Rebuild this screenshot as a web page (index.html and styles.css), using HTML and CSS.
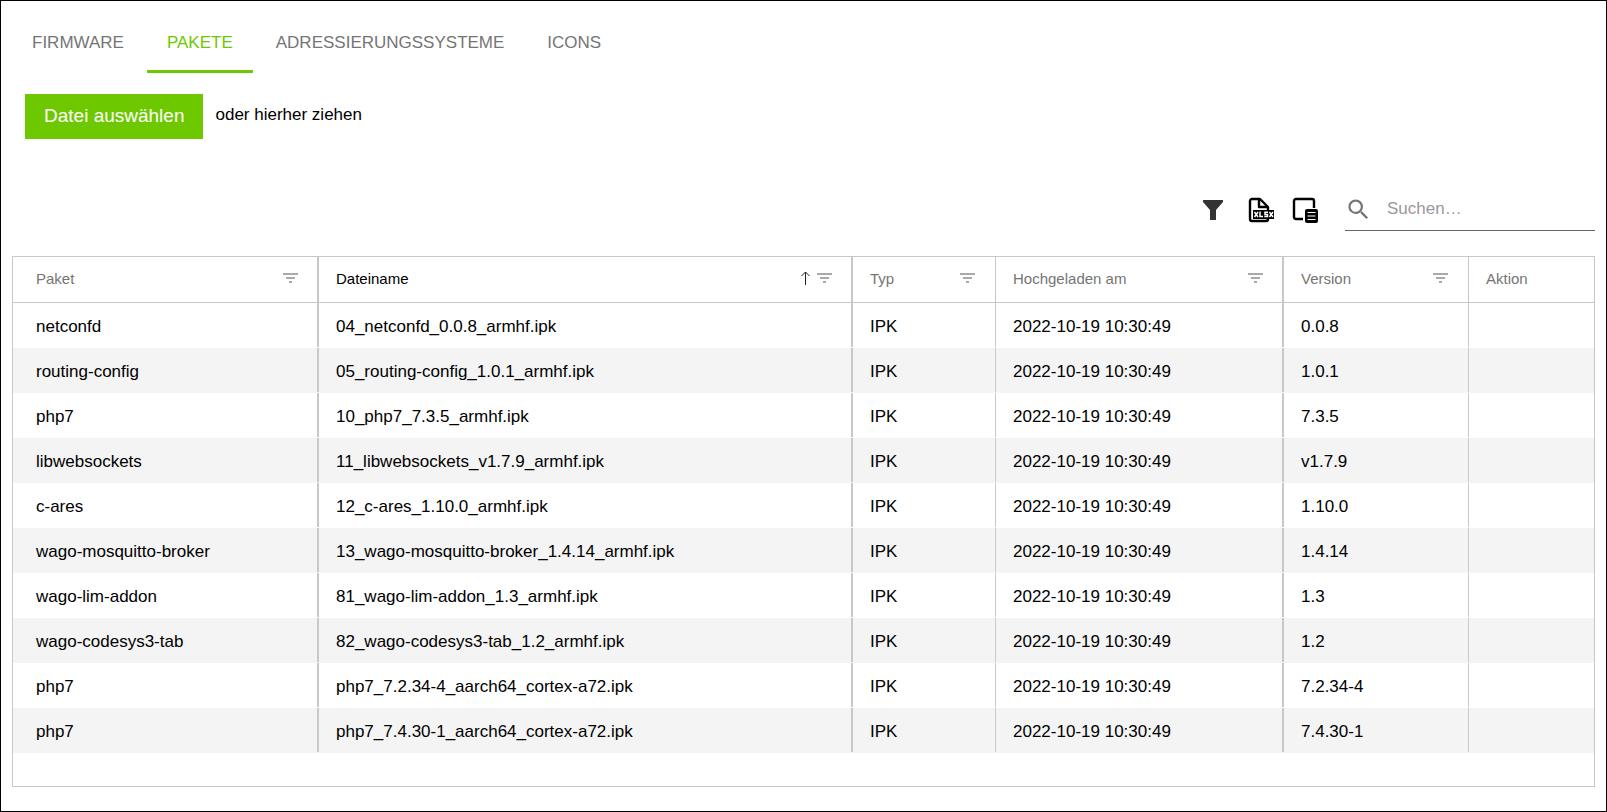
FILE: index.html
```
<!DOCTYPE html>
<html lang="de">
<head>
<meta charset="utf-8">
<title>Pakete</title>
<link rel="stylesheet" href="styles.css">
</head>
<body>
<svg class="sprite" aria-hidden="true">
  <symbol id="filter" viewBox="0 0 15 10"><path d="M0 0h15v2H0zM3 4h9v2H3zM6 8h3v2H6z"/></symbol>
</svg>
<main class="page">
  <nav class="tabs">
    <a class="tab" href="#firmware">FIRMWARE</a>
    <a class="tab tab-active" href="#pakete" aria-current="page">PAKETE</a>
    <a class="tab" href="#adressierung">ADRESSIERUNGSSYSTEME</a>
    <a class="tab" href="#icons">ICONS</a>
  </nav>

  <section class="upload">
    <button class="upload-button" type="button">Datei auswählen</button>
    <span class="upload-hint">oder hierher ziehen</span>
  </section>

  <section class="toolbar">
    <button class="tool" type="button" aria-label="Filter">
      <svg width="26" height="26" viewBox="0 0 26 26"><path fill="#333" d="M3 3h20v2l-7 8v10h-6V13L3 5z"/></svg>
    </button>
    <button class="tool" type="button" aria-label="XLSX exportieren">
      <svg width="26" height="26" viewBox="0 0 26 26">
        <path fill="none" stroke="#000" stroke-width="2.4" stroke-linejoin="round" d="M12 2H4a2 2 0 0 0-2 2v18a2 2 0 0 0 2 2h14a2 2 0 0 0 2-2V10l-8-8zM11 2v8h9"/>
        <path d="M5 13h21v9H5z"/>
        <path fill="none" stroke="#fff" stroke-width="1.500" d="M6.500 15l3.500 5M10 15l-3.500 5M12 14.500v5h3M20 15.200h-3v2.200h2.500v2.200h-3.200M21.500 15l3.500 5M25 15l-3.500 5"/>
      </svg>
    </button>
    <button class="tool" type="button" aria-label="Spaltenauswahl">
      <svg width="26" height="26" viewBox="0 0 26 26">
        <path fill="none" stroke="#000" stroke-width="2.4" d="M11 22H4a2 2 0 0 1-2-2V4a2 2 0 0 1 2-2h16a2 2 0 0 1 2 2v7"/>
        <rect x="13" y="12" width="13" height="14" rx="2"/>
        <path stroke="#fff" stroke-width="1.200" d="M15.500 15.500h8M15.500 19h8M15.500 22.500h8"/>
      </svg>
    </button>
    <label class="search">
      <svg width="27" height="27" viewBox="0 0 24 24" aria-hidden="true"><path fill="#757575" d="M15.500 14h-.790l-.280-.270A6.471 6.471 0 0 0 16 9.500 6.500 6.500 0 1 0 9.500 16c1.610 0 3.090-.590 4.230-1.570l.270.280v.790l5 4.990L20.490 19l-4.990-5zm-6 0C7.010 14 5 11.990 5 9.500S7.010 5 9.500 5 14 7.010 14 9.500 11.990 14 9.500 14z"/></svg>
      <input class="search-input" type="text" placeholder="Suchen…" aria-label="Suchen">
    </label>
  </section>

  <section class="grid">
    <table class="table">
      <colgroup>
        <col class="col-paket"><col class="col-datei"><col class="col-typ"><col class="col-datum"><col class="col-version"><col class="col-aktion">
      </colgroup>
      <thead>
        <tr>
          <th class="thick"><div class="head"><span>Paket</span><svg class="filter"><use href="#filter"/></svg></div></th>
          <th class="thick sorted" aria-sort="ascending"><div class="head"><span>Dateiname</span><svg class="arrow" viewBox="0 0 9 14"><path d="M4.500 14V1M.5 5l4-4 4 4"/></svg><svg class="filter"><use href="#filter"/></svg></div></th>
          <th><div class="head"><span>Typ</span><svg class="filter"><use href="#filter"/></svg></div></th>
          <th class="thick"><div class="head"><span>Hochgeladen am</span><svg class="filter"><use href="#filter"/></svg></div></th>
          <th><div class="head"><span>Version</span><svg class="filter"><use href="#filter"/></svg></div></th>
          <th class="last"><div class="head"><span>Aktion</span></div></th>
        </tr>
      </thead>
      <tbody>
        <tr><td class="thick">netconfd</td><td class="thick">04_netconfd_0.0.8_armhf.ipk</td><td>IPK</td><td class="thick">2022-10-19 10:30:49</td><td>0.0.8</td><td class="last"></td></tr>
        <tr><td class="thick">routing-config</td><td class="thick">05_routing-config_1.0.1_armhf.ipk</td><td>IPK</td><td class="thick">2022-10-19 10:30:49</td><td>1.0.1</td><td class="last"></td></tr>
        <tr><td class="thick">php7</td><td class="thick">10_php7_7.3.5_armhf.ipk</td><td>IPK</td><td class="thick">2022-10-19 10:30:49</td><td>7.3.5</td><td class="last"></td></tr>
        <tr><td class="thick">libwebsockets</td><td class="thick">11_libwebsockets_v1.7.9_armhf.ipk</td><td>IPK</td><td class="thick">2022-10-19 10:30:49</td><td>v1.7.9</td><td class="last"></td></tr>
        <tr><td class="thick">c-ares</td><td class="thick">12_c-ares_1.10.0_armhf.ipk</td><td>IPK</td><td class="thick">2022-10-19 10:30:49</td><td>1.10.0</td><td class="last"></td></tr>
        <tr><td class="thick">wago-mosquitto-broker</td><td class="thick">13_wago-mosquitto-broker_1.4.14_armhf.ipk</td><td>IPK</td><td class="thick">2022-10-19 10:30:49</td><td>1.4.14</td><td class="last"></td></tr>
        <tr><td class="thick">wago-lim-addon</td><td class="thick">81_wago-lim-addon_1.3_armhf.ipk</td><td>IPK</td><td class="thick">2022-10-19 10:30:49</td><td>1.3</td><td class="last"></td></tr>
        <tr><td class="thick">wago-codesys3-tab</td><td class="thick">82_wago-codesys3-tab_1.2_armhf.ipk</td><td>IPK</td><td class="thick">2022-10-19 10:30:49</td><td>1.2</td><td class="last"></td></tr>
        <tr><td class="thick">php7</td><td class="thick">php7_7.2.34-4_aarch64_cortex-a72.ipk</td><td>IPK</td><td class="thick">2022-10-19 10:30:49</td><td>7.2.34-4</td><td class="last"></td></tr>
        <tr><td class="thick">php7</td><td class="thick">php7_7.4.30-1_aarch64_cortex-a72.ipk</td><td>IPK</td><td class="thick">2022-10-19 10:30:49</td><td>7.4.30-1</td><td class="last"></td></tr>
      </tbody>
    </table>
  </section>
</main>
</body>
</html>
```
FILE: styles.css
```
* { box-sizing: border-box; }

body {
  margin: 0;
  font-family: "Liberation Sans", Arial, sans-serif;
  font-size: 17px;
  color: #000;
  background: #fff;
}

.sprite { display: none; }

.page {
  min-height: 100vh;
  border: 1px solid #000;
  padding: 12px 11px 24px;
}

.tabs { display: flex; gap: 3px; }

.tab {
  padding: 3px 20px 0;
  line-height: 54px;
  border-bottom: 3px solid transparent;
  color: #757575;
  text-decoration: none;
}

.tab-active { color: #6ec800; border-color: #6ec800; }

.upload {
  display: flex;
  align-items: center;
  gap: 12px;
  margin: 21px 13px 0;
}

.upload-button {
  height: 45px;
  padding: 0 19px 2px;
  border: 0;
  background: #6ec800;
  color: #fff;
  font: inherit;
  font-size: 19px;
}

.upload-hint { padding-bottom: 3px; }

.toolbar {
  display: flex;
  justify-content: flex-end;
  align-items: center;
  margin-top: 46px;
}

.tool {
  padding: 3px 0 0;
  margin-right: 18px;
  border: 0;
  background: none;
}

.tool:first-child { margin-right: 22px; }

.tool svg { display: block; }

.search {
  display: flex;
  align-items: center;
  width: 250px;
  height: 46px;
  margin-left: 9px;
  padding-top: 3px;
  border-bottom: 1px solid #666;
}

.search-input {
  flex: 1;
  min-width: 0;
  padding: 0 0 0 15px;
  border: 0;
  outline: 0;
  background: none;
  font: inherit;
}

.search-input::placeholder { color: #999; opacity: 1; }

.grid {
  margin-top: 25px;
  padding-bottom: 33px;
  border: 1px solid #cbc7c3;
}

.table {
  width: 100%;
  table-layout: fixed;
  border-collapse: separate;
  border-spacing: 0;
}

.col-paket { width: 306px; }
.col-typ { width: 143px; }
.col-datum { width: 288px; }
.col-version { width: 185px; }
.col-aktion { width: 125px; }

th, td {
  --line: 1px;
  height: 45px;
  padding: 2px 21px 0 17px;
  text-align: left;
  background: linear-gradient(#cbc7c3, #cbc7c3) right top / var(--line) calc(100% - 1px) no-repeat;
}

th {
  height: 46px;
  padding-top: 0;
  padding-bottom: 3px;
  border-bottom: 1px solid #cbc7c3;
  background-size: var(--line) 100%;
  font-size: 15px;
  font-weight: 400;
  color: #757575;
}

th:first-child, td:first-child { padding-left: 23px; }
.thick { --line: 2px; }
.last { background: none; }
.sorted { color: #000; }

tbody tr:nth-child(even) { background: #f4f4f4; }

.head { display: flex; align-items: center; gap: 7px; }
.head span { flex: 1; }

.filter { width: 15px; height: 10px; fill: #aaa; }
.arrow { width: 9px; height: 14px; fill: none; stroke: #222; }
```
